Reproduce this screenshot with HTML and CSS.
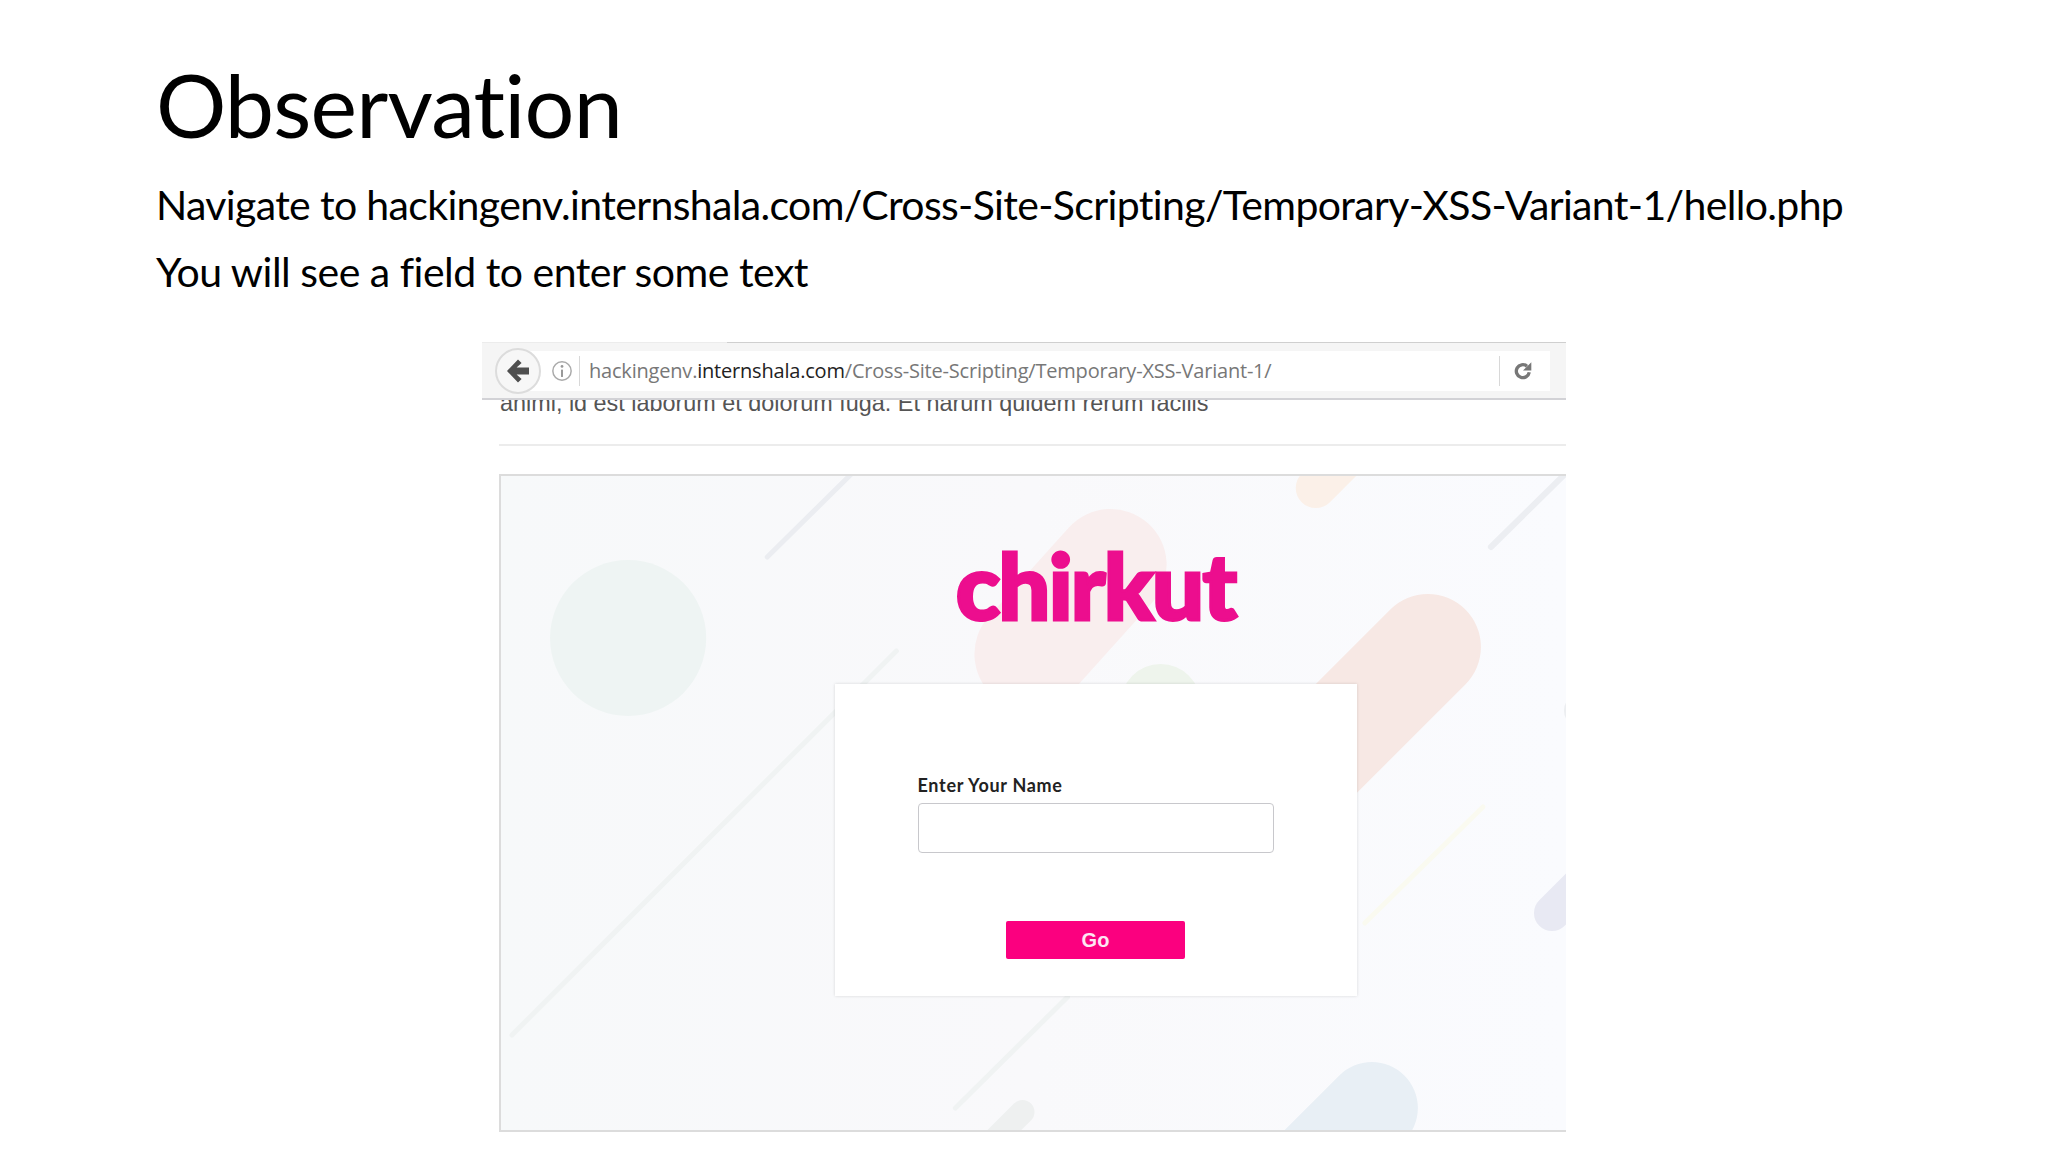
FILE: index.html
```html
<!DOCTYPE html>
<html lang="en">
<head>
<meta charset="utf-8">
<title>Observation</title>
<link rel="stylesheet" href="styles.css">
</head>
<body>
<main class="slide">
  <h1 class="title">Observation</h1>
  <p class="line line-first">Navigate to hackingenv.internshala.com/Cross-Site-Scripting/Temporary-XSS-Variant-1/hello.php</p>
  <p class="line line-second">You will see a field to enter some text</p>
  <section class="shot">
    <div class="page-strip">
      <p class="ghost">animi, id est laborum et dolorum fuga. Et harum quidem rerum facilis</p>
      <div class="rule"></div>
    </div>
    <div class="browser-bar">
      <span class="back">
        <svg viewBox="0 0 24 24" width="24" height="24"><path d="M12 .5 1 12l11 11.500 3.600-3.600-5-4.400H23v-7H10.600l5-4.400z" fill="#4f4f4f"/></svg>
      </span>
      <div class="url-box">
        <span class="info">
          <svg viewBox="0 0 24 24" width="22" height="22"><circle cx="12" cy="12" r="10" fill="none" stroke="#aaa" stroke-width="1.600"/><circle cx="12" cy="7" r="1.500" fill="#999"/><path d="M12 10.500v8" stroke="#999" stroke-width="2.200"/></svg>
        </span>
        <span class="url"><span class="url-dim">hackingenv.</span><span class="url-domain">internshala.com</span><span class="url-dim">/Cross-Site-Scripting/Temporary-XSS-Variant-1/</span></span>
        <span class="reload">
          <svg viewBox="0 0 24 24" width="20" height="20"><path d="M19.500 13.500A7.800 7.800 0 1 1 16.800 6.200" fill="none" stroke="#777" stroke-width="4"/><path d="M22 1.500v10h-10z" fill="#777"/></svg>
        </span>
      </div>
    </div>
    <div class="panel">
      <svg class="panel-art" viewBox="501 476 1064 654" preserveAspectRatio="none">
        <circle cx="628" cy="638" r="78" fill="#eef4f3"/>
        <g stroke-linecap="round" fill="none">
          <path d="M1315 488 L1380 423" stroke="#fbf0e8" stroke-width="40"/>
          <path d="M1110 565 L1030 654" stroke="#f9eeee" stroke-width="112"/>
          <path d="M1427 647 L1200 874" stroke="#f7e8e4" stroke-width="106"/>
          <path d="M1578 710 L1578 711" stroke="#eceef1" stroke-width="30"/>
          <path d="M1551 913 L1610 854" stroke="#e8e9f3" stroke-width="36"/>
          <path d="M1371 1108 L1271 1208" stroke="#e8eff5" stroke-width="92"/>
          <path d="M1022 1112 L990 1144" stroke="#eef0f0" stroke-width="24"/>
        </g>
        <circle cx="1160" cy="704" r="40" fill="#eef4ec"/>
        <g stroke-linecap="round" fill="none" stroke-width="5">
          <path d="M850 475 L767 557" stroke="#ebedf1"/>
          <path d="M1563 475 L1490 547" stroke="#eceef2" stroke-width="6"/>
          <path d="M896 651 L512 1035" stroke="#f0f3f3"/>
          <path d="M1067 997 L955 1108" stroke="#f0f3f3"/>
          <path d="M1482 807 L1364 923" stroke="#fafaf0"/>
        </g>
      </svg>
      <div class="logo">chirkut</div>
      <form class="card">
        <label class="field-label" for="name">Enter Your Name</label>
        <input class="field" id="name" type="text">
        <button class="go" type="button">Go</button>
      </form>
    </div>
  </section>
</main>
</body>
</html>
```
FILE: styles.css
```css
* { box-sizing: border-box; }
html, body { margin: 0; background: #fff; }
body { width: 2048px; height: 1152px; overflow: hidden; font-family: "Lato", "Liberation Sans", sans-serif; color: #000; }
.slide { padding: 58px 0 0 156px; height: 1152px; }
.title { margin: 0; font-size: 88px; font-weight: 400; line-height: 92px; letter-spacing: -0.8px; }
.line { margin: 0; font-size: 41px; line-height: 50px; letter-spacing: -0.65px; white-space: nowrap; }
.line-first { margin-top: 30px; }
.line-second { margin-top: 17px; letter-spacing: -0.5px; }
.shot { position: relative; width: 1085px; margin: 45px 0 0 325px; }
.browser-bar { position: absolute; top: 0; left: 1px; right: 0; height: 58px; background: linear-gradient(to right, #ececec 245px, #cfcfcf 245px) top / 100% 1px no-repeat, #f5f5f5; border-bottom: 2px solid #d2d2d6; display: flex; align-items: center; padding: 1px 16px 0 13px; }
.back { position: relative; z-index: 1; width: 46px; height: 46px; border-radius: 50%; background: #f7f7f7; border: 2px solid #dcdcdc; display: flex; align-items: center; justify-content: center; flex: none; }
.url-box { height: 40px; flex: 1; margin-left: -12px; background: #fff; display: flex; align-items: center; padding-left: 22px; }
.info { width: 22px; height: 22px; display: flex; flex: none; }
.url { margin-left: 6px; padding-left: 9px; border-left: 1px solid #d8d8d8; height: 30px; line-height: 29px; font-family: "Open Sans", sans-serif; font-size: 20px; letter-spacing: -0.2px; white-space: nowrap; flex: 1; }
.url-dim { color: #777; }
.url-domain { color: #222; }
.reload { width: 51px; height: 30px; border-left: 1px solid #d8d8d8; display: flex; align-items: center; justify-content: center; flex: none; padding-right: 4px; }
.page-strip { padding: 43px 0 0 19px; height: 132px; overflow: hidden; }
.ghost { margin: 0; font-family: "Liberation Sans", sans-serif; font-size: 23.4px; line-height: 36px; color: #555; white-space: nowrap; }
.rule { height: 2px; background: #ececec; margin-top: 23px; margin-left: -1px; }
.panel { position: relative; margin-left: 18px; height: 658px; background: linear-gradient(to right, #f7f9fa, #f9f9fb 50%, #fafbfe); border: 2px solid #dcdcdc; border-right: 0; display: flex; flex-direction: column; align-items: center; overflow: hidden; }
.panel-art { position: absolute; inset: 0; width: 100%; height: 100%; filter: blur(0.6px); }
.logo { position: relative; margin-top: 61px; height: 96px; font-family: "Lato", sans-serif; font-weight: 900; font-size: 92px; line-height: 96px; letter-spacing: -1.8px; color: #ec0e8e; -webkit-text-stroke: 3px #ec0e8e; margin-left: 124px; }
.card { position: relative; margin-left: 124px; margin-top: 51px; width: 522px; height: 312px; background: #fff; box-shadow: 0 0 3px rgba(0,0,0,.14); padding: 90px 83px 0; display: flex; flex-direction: column; }
.field-label { font-family: "Lato", sans-serif; font-weight: 700; font-size: 18px; line-height: 22px; color: #222; letter-spacing: 0.7px; }
.field { margin-top: 7px; height: 50px; width: 356px; background: #fff; border: 1.5px solid #c8c8cc; border-radius: 4px; }
.go { margin: 68px auto 0; width: 179px; height: 38px; background: #fb007f; border: 0; border-radius: 2px; color: #fde6f3; font-family: "Liberation Sans", sans-serif; font-weight: 700; font-size: 20px; padding: 0; }
```
